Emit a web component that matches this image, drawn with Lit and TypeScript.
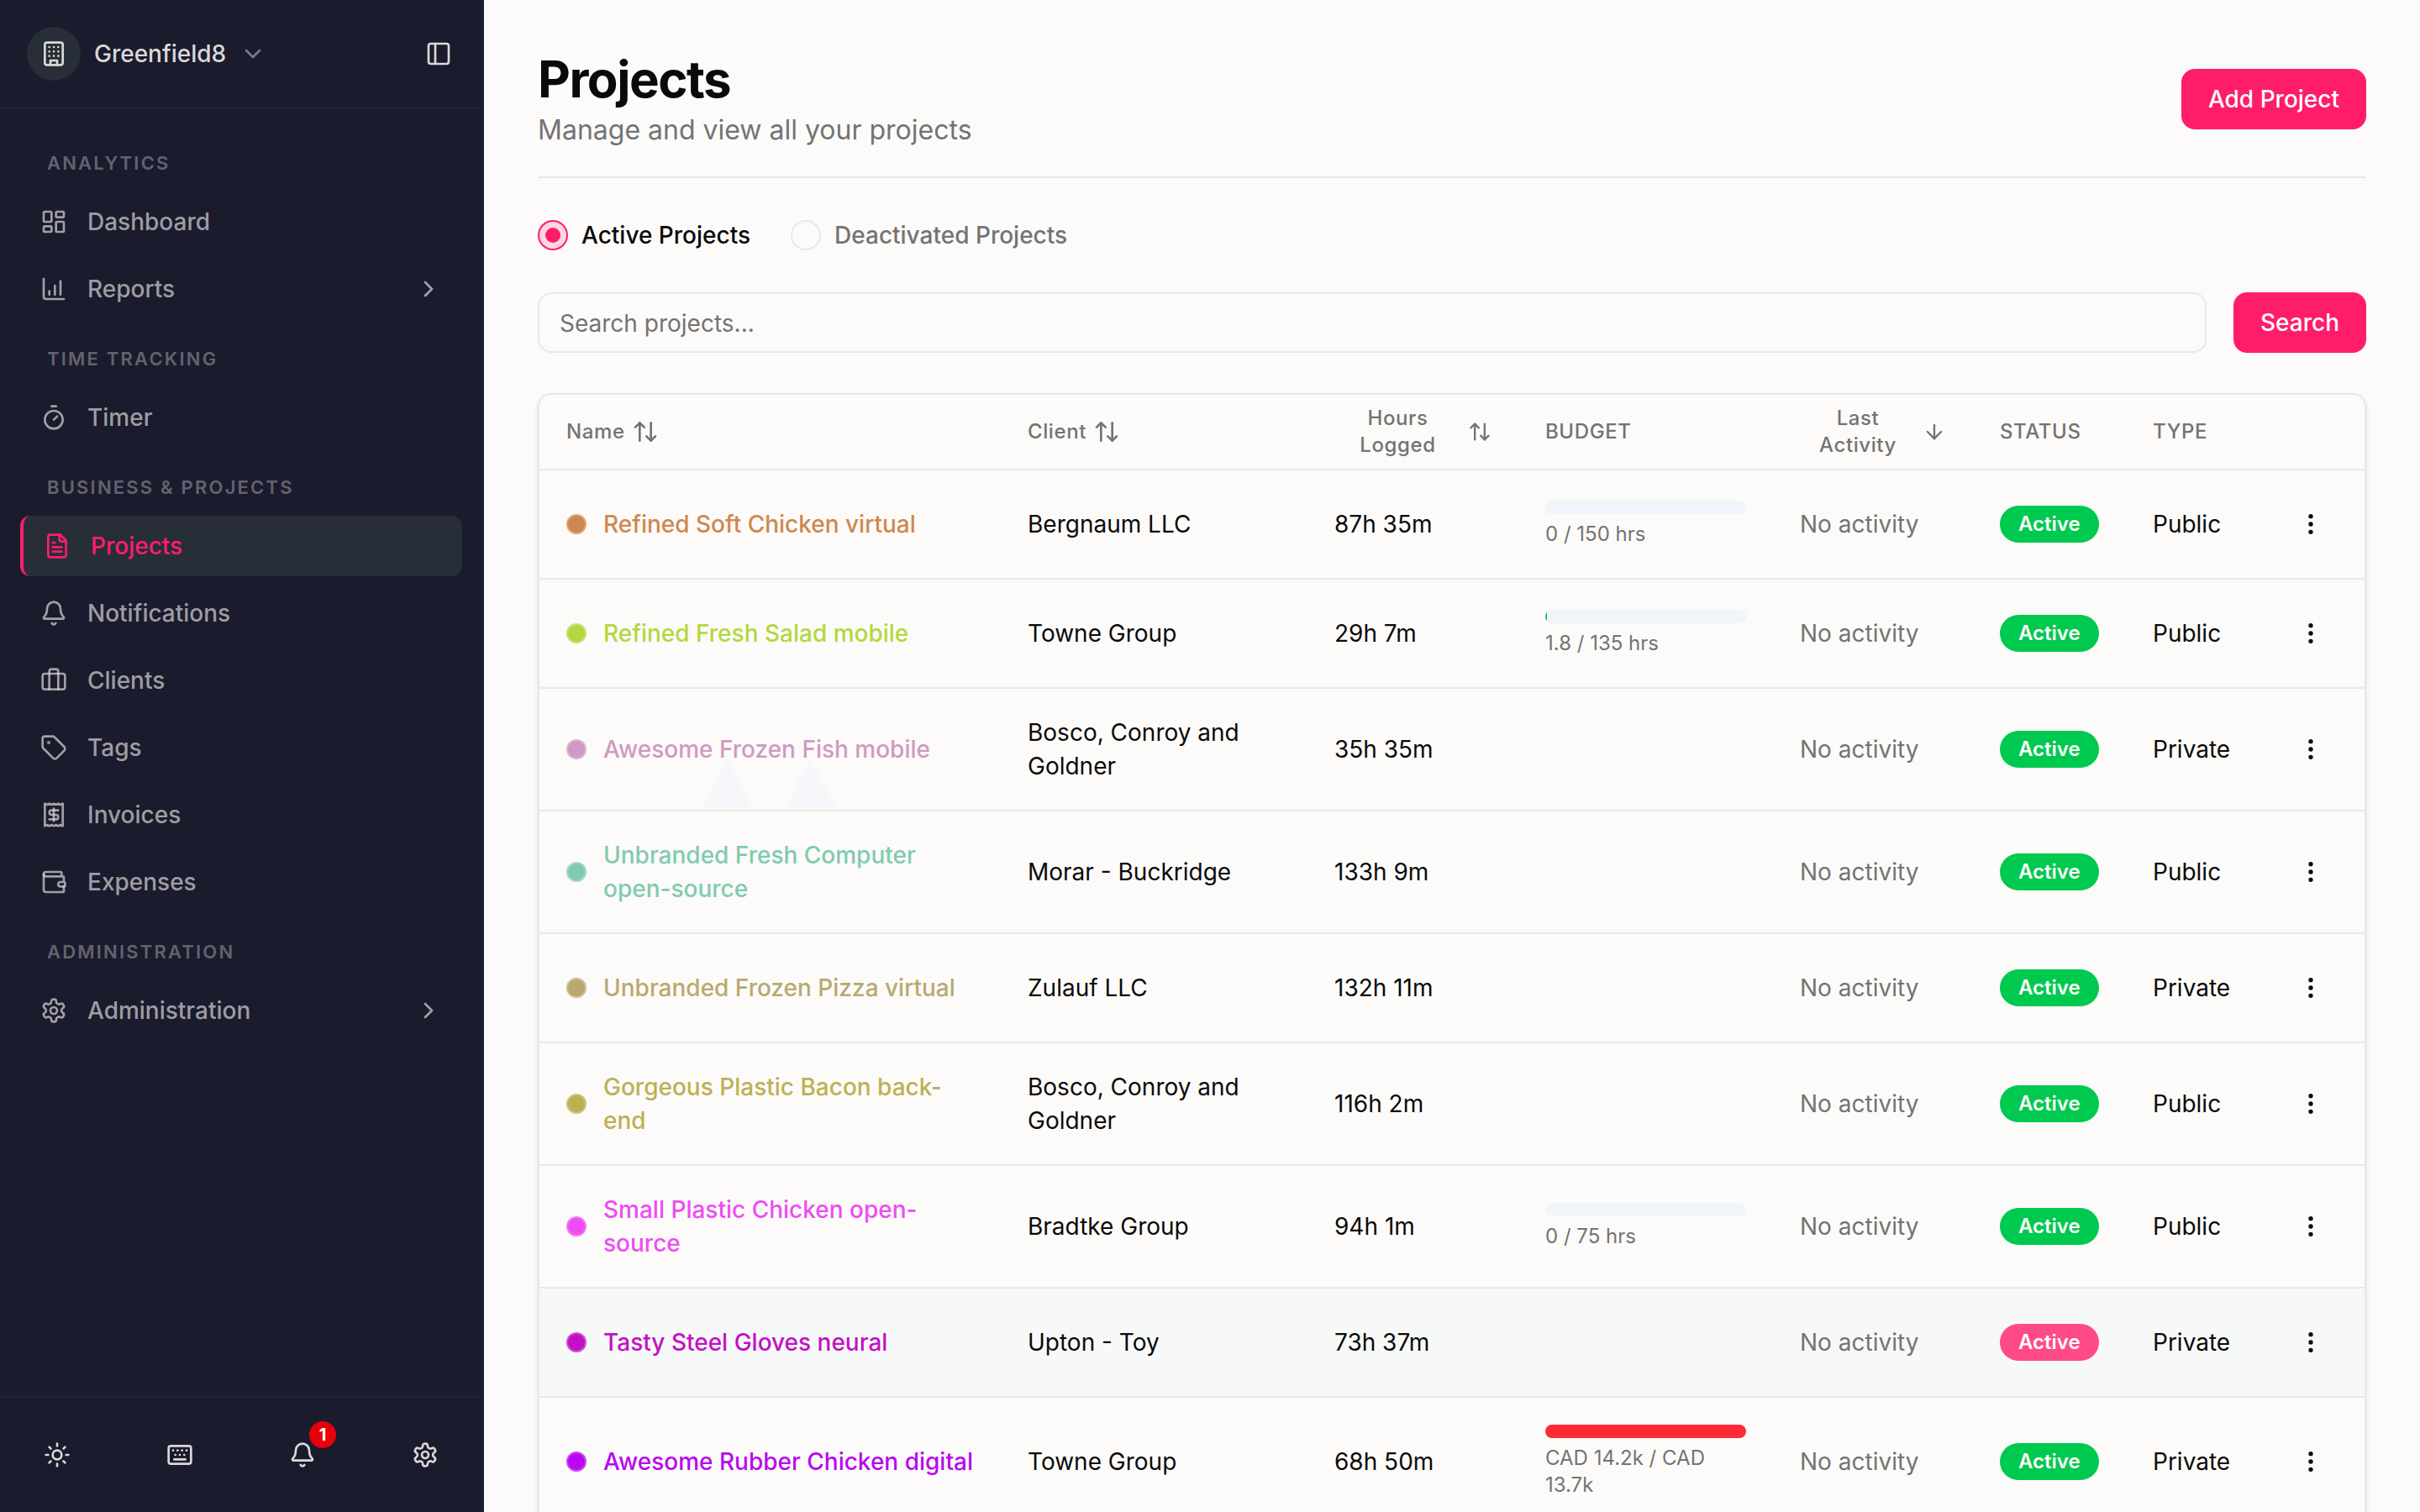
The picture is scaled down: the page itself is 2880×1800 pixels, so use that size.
import { LitElement, html, css, svg, nothing } from "lit";
import { customElement, property, state } from "lit/decorators.js";
import { classMap } from "lit/directives/class-map.js";
import { styleMap } from "lit/directives/style-map.js";

const ICONS: Record<string, ReturnType<typeof svg>> = {
  building: svg`<rect x="4" y="2" width="16" height="20" rx="2" /><path d="M9 22v-4h6v4" /><path d="M8 6h.01M16 6h.01M12 6h.01M12 10h.01M12 14h.01M16 10h.01M16 14h.01M8 10h.01M8 14h.01" />`,
  "chevron-down": svg`<path d="m6 9 6 6 6-6" />`,
  "chevron-right": svg`<path d="m9 18 6-6-6-6" />`,
  panel: svg`<rect x="3" y="3" width="18" height="18" rx="2" /><path d="M9 3v18" />`,
  dashboard: svg`<rect x="3" y="3" width="7" height="9" rx="1" /><rect x="14" y="3" width="7" height="5" rx="1" /><rect x="14" y="12" width="7" height="9" rx="1" /><rect x="3" y="16" width="7" height="5" rx="1" />`,
  chart: svg`<path d="M13 17V9" /><path d="M18 17V5" /><path d="M3 3v16a2 2 0 0 0 2 2h16" /><path d="M8 17v-3" />`,
  timer: svg`<path d="M10 2h4" /><path d="m12 14 3-3" /><circle cx="12" cy="14" r="8" />`,
  file: svg`<path d="M15 2H6a2 2 0 0 0-2 2v16a2 2 0 0 0 2 2h12a2 2 0 0 0 2-2V7Z" /><path d="M14 2v4a2 2 0 0 0 2 2h4" /><path d="M10 9H8" /><path d="M16 13H8" /><path d="M16 17H8" />`,
  bell: svg`<path d="M10.268 21a2 2 0 0 0 3.464 0" /><path d="M3.262 15.326A1 1 0 0 0 4 17h16a1 1 0 0 0 .74-1.673C19.41 13.956 18 12.499 18 8A6 6 0 0 0 6 8c0 4.499-1.411 5.956-2.738 7.326" />`,
  briefcase: svg`<path d="M16 20V4a2 2 0 0 0-2-2h-4a2 2 0 0 0-2 2v16" /><rect x="2" y="6" width="20" height="14" rx="2" />`,
  tag: svg`<path d="M12.586 2.586A2 2 0 0 0 11.172 2H4a2 2 0 0 0-2 2v7.172a2 2 0 0 0 .586 1.414l8.704 8.704a2.426 2.426 0 0 0 3.42 0l6.58-6.58a2.426 2.426 0 0 0 0-3.42z" /><circle cx="7.5" cy="7.5" r=".5" fill="currentColor" />`,
  receipt: svg`<path d="M4 2v20l2-1 2 1 2-1 2 1 2-1 2 1 2-1 2 1V2l-2 1-2-1-2 1-2-1-2 1-2-1-2 1Z" /><path d="M16 8h-6a2 2 0 1 0 0 4h4a2 2 0 1 1 0 4H8" /><path d="M12 17.5v-11" />`,
  wallet: svg`<path d="M19 7V4a1 1 0 0 0-1-1H5a2 2 0 0 0 0 4h15a1 1 0 0 1 1 1v4h-3a2 2 0 0 0 0 4h3a1 1 0 0 0 1-1v-2a1 1 0 0 0-1-1" /><path d="M3 5v14a2 2 0 0 0 2 2h15a1 1 0 0 0 1-1v-4" />`,
  settings: svg`<path d="M12.22 2h-.44a2 2 0 0 0-2 2v.18a2 2 0 0 1-1 1.73l-.43.25a2 2 0 0 1-2 0l-.15-.08a2 2 0 0 0-2.73.73l-.22.38a2 2 0 0 0 .73 2.73l.15.1a2 2 0 0 1 1 1.72v.51a2 2 0 0 1-1 1.74l-.15.09a2 2 0 0 0-.73 2.73l.22.38a2 2 0 0 0 2.73.73l.15-.08a2 2 0 0 1 2 0l.43.25a2 2 0 0 1 1 1.73V20a2 2 0 0 0 2 2h.44a2 2 0 0 0 2-2v-.18a2 2 0 0 1 1-1.73l.43-.25a2 2 0 0 1 2 0l.15.08a2 2 0 0 0 2.73-.73l.22-.39a2 2 0 0 0-.73-2.73l-.15-.08a2 2 0 0 1-1-1.74v-.5a2 2 0 0 1 1-1.74l.15-.09a2 2 0 0 0 .73-2.73l-.22-.38a2 2 0 0 0-2.73-.73l-.15.08a2 2 0 0 1-2 0l-.43-.25a2 2 0 0 1-1-1.73V4a2 2 0 0 0-2-2z" /><circle cx="12" cy="12" r="3" />`,
  sun: svg`<circle cx="12" cy="12" r="4" /><path d="M12 2v2" /><path d="M12 20v2" /><path d="m4.93 4.93 1.41 1.41" /><path d="m17.66 17.66 1.41 1.41" /><path d="M2 12h2" /><path d="M20 12h2" /><path d="m6.34 17.66-1.41 1.41" /><path d="m19.07 4.93-1.41 1.41" />`,
  keyboard: svg`<rect x="2" y="4" width="20" height="16" rx="2" /><path d="M6 8h.01M10 8h.01M14 8h.01M18 8h.01M8 12h.01M12 12h.01M16 12h.01" /><path d="M7 16h10" />`,
  sort: svg`<path d="m21 16-4 4-4-4" /><path d="M17 20V4" /><path d="m3 8 4-4 4 4" /><path d="M7 4v16" />`,
  "arrow-down": svg`<path d="M12 5v14" /><path d="m19 12-7 7-7-7" />`,
  dots: svg`<circle cx="12" cy="12" r="1" /><circle cx="12" cy="5" r="1" /><circle cx="12" cy="19" r="1" />`,
};

interface NavItem {
  label: string;
  icon: string;
  active?: boolean;
  expandable?: boolean;
}

interface NavGroup {
  title: string;
  items: NavItem[];
}

interface Project {
  name: string;
  color: string;
  client: string;
  hours: string;
  type: "Public" | "Private";
  budget?: { label: string; percent: number; over?: boolean };
  highlighted?: boolean;
  peaks?: boolean;
}

const NAV: NavGroup[] = [
  {
    title: "Analytics",
    items: [
      { label: "Dashboard", icon: "dashboard" },
      { label: "Reports", icon: "chart", expandable: true },
    ],
  },
  { title: "Time tracking", items: [{ label: "Timer", icon: "timer" }] },
  {
    title: "Business & projects",
    items: [
      { label: "Projects", icon: "file", active: true },
      { label: "Notifications", icon: "bell" },
      { label: "Clients", icon: "briefcase" },
      { label: "Tags", icon: "tag" },
      { label: "Invoices", icon: "receipt" },
      { label: "Expenses", icon: "wallet" },
    ],
  },
  {
    title: "Administration",
    items: [{ label: "Administration", icon: "settings", expandable: true }],
  },
];

const PROJECTS: Project[] = [
  { name: "Refined Soft Chicken virtual", color: "#ce884f", client: "Bergnaum LLC", hours: "87h 35m", type: "Public", budget: { label: "0 / 150 hrs", percent: 0 } },
  { name: "Refined Fresh Salad mobile", color: "#b2d83f", client: "Towne Group", hours: "29h 7m", type: "Public", budget: { label: "1.8 / 135 hrs", percent: 1 } },
  { name: "Awesome Frozen Fish mobile", color: "#cf9ac2", client: "Bosco, Conroy and Goldner", hours: "35h 35m", type: "Private", peaks: true },
  { name: "Unbranded Fresh Computer open-source", color: "#80cbb0", client: "Morar - Buckridge", hours: "133h 9m", type: "Public" },
  { name: "Unbranded Frozen Pizza virtual", color: "#b9a96f", client: "Zulauf LLC", hours: "132h 11m", type: "Private" },
  { name: "Gorgeous Plastic Bacon back-end", color: "#bdb053", client: "Bosco, Conroy and Goldner", hours: "116h 2m", type: "Public" },
  { name: "Small Plastic Chicken open-source", color: "#ed4df3", client: "Bradtke Group", hours: "94h 1m", type: "Public", budget: { label: "0 / 75 hrs", percent: 0 } },
  { name: "Tasty Steel Gloves neural", color: "#c310c6", client: "Upton - Toy", hours: "73h 37m", type: "Private", highlighted: true },
  { name: "Awesome Rubber Chicken digital", color: "#b908f0", client: "Towne Group", hours: "68h 50m", type: "Private", budget: { label: "CAD 14.2k / CAD 13.7k", percent: 100, over: true } },
];

const shared = css`
  *,
  *::before,
  *::after {
    box-sizing: border-box;
  }
  button,
  input {
    font: inherit;
    color: inherit;
    margin: 0;
  }
  button {
    border: 0;
    padding: 0;
    background: none;
    cursor: pointer;
  }
  a {
    color: inherit;
    text-decoration: none;
  }
`;

@customElement("ui-icon")
export class UiIcon extends LitElement {
  @property() name = "";

  static styles = css`
    :host {
      display: block;
      flex: none;
      width: 32px;
      height: 32px;
    }
    .icon {
      display: block;
      width: 100%;
      height: 100%;
      fill: none;
      stroke: currentColor;
      stroke-width: 2;
      stroke-linecap: round;
      stroke-linejoin: round;
    }
  `;

  render() {
    return html`<svg class="icon" viewBox="0 0 24 24" aria-hidden="true">${ICONS[this.name]}</svg>`;
  }
}

@customElement("app-sidebar")
export class AppSidebar extends LitElement {
  static styles = [
    shared,
    css`
      :host {
        display: flex;
        flex-direction: column;
        width: 576px;
        flex: none;
        background: #1b1b2e;
        border-right: 2px solid #1e2532;
        color: #dad9d7;
      }
      .header {
        display: flex;
        align-items: center;
        justify-content: space-between;
        padding: 32px 36px 32px 32px;
        border-bottom: 2px solid #1e2532;
      }
      .team {
        display: flex;
        align-items: center;
        gap: 16px;
        font-weight: 500;
      }
      .avatar {
        display: grid;
        place-items: center;
        width: 64px;
        height: 64px;
        border-radius: 50%;
        background: #272e37;
      }
      .caret {
        opacity: 0.5;
      }
      .nav {
        flex: 1;
        display: flex;
        flex-direction: column;
        gap: 16px;
        padding: 33px 24px;
      }
      .title {
        margin: 0;
        height: 65px;
        padding: 15px 32px;
        font-size: 22px;
        line-height: 32px;
        font-weight: 600;
        letter-spacing: 0.1em;
        text-transform: uppercase;
        color: rgba(218, 217, 215, 0.4);
      }
      .items {
        display: flex;
        flex-direction: column;
        gap: 8px;
        margin: 0;
        padding: 0;
        list-style: none;
      }
      .item {
        display: flex;
        align-items: center;
        gap: 24px;
        height: 72px;
        padding: 0 24px;
        border-radius: 12px;
        font-weight: 500;
        color: rgba(218, 217, 215, 0.7);
      }
      .item.active {
        border-left: 4px solid #ff1d6b;
        background: #272e37;
        color: #ff1d6b;
      }
      .label {
        flex: 1;
      }
      .footer {
        display: flex;
        justify-content: space-between;
        padding: 32px;
        border-top: 2px solid #1e2532;
      }
      .tool {
        position: relative;
        display: grid;
        place-items: center;
        width: 72px;
        height: 72px;
      }
      .count {
        position: absolute;
        top: -4px;
        right: -4px;
        width: 32px;
        height: 32px;
        border-radius: 50%;
        background: #e7000b;
        color: #fff;
        font-size: 20px;
        line-height: 32px;
        font-weight: 700;
        text-align: center;
      }
    `,
  ];

  render() {
    return html`
      <div class="header">
        <button class="team" type="button">
          <span class="avatar"><ui-icon name="building"></ui-icon></span>
          <span>Greenfield8</span>
          <ui-icon class="caret" name="chevron-down"></ui-icon>
        </button>
        <button type="button" aria-label="Toggle sidebar"><ui-icon name="panel"></ui-icon></button>
      </div>
      <nav class="nav">
        ${NAV.map(
          (group) => html`
            <section>
              <h2 class="title">${group.title}</h2>
              <ul class="items">
                ${group.items.map(
                  (item) => html`
                    <li>
                      <a
                        class=${classMap({ item: true, active: !!item.active })}
                        href="#"
                        aria-current=${item.active ? "page" : nothing}
                      >
                        <ui-icon name=${item.icon}></ui-icon>
                        <span class="label">${item.label}</span>
                        ${item.expandable ? html`<ui-icon name="chevron-right"></ui-icon>` : nothing}
                      </a>
                    </li>
                  `
                )}
              </ul>
            </section>
          `
        )}
      </nav>
      <div class="footer">
        <button class="tool" type="button" aria-label="Theme"><ui-icon name="sun"></ui-icon></button>
        <button class="tool" type="button" aria-label="Shortcuts"><ui-icon name="keyboard"></ui-icon></button>
        <button class="tool" type="button" aria-label="Notifications">
          <ui-icon name="bell"></ui-icon>
          <span class="count">1</span>
        </button>
        <button class="tool" type="button" aria-label="Settings"><ui-icon name="settings"></ui-icon></button>
      </div>
    `;
  }
}

@customElement("project-table")
export class ProjectTable extends LitElement {
  @property({ attribute: false }) projects: Project[] = [];

  static styles = [
    shared,
    css`
      :host {
        display: block;
        border: 2px solid #e8e8e6;
        border-radius: 16px;
        overflow: hidden;
        box-shadow: 0 2px 6px rgba(0, 0, 0, 0.1);
      }
      .table {
        width: 100%;
        table-layout: fixed;
        border-collapse: separate;
        border-spacing: 0;
        text-align: left;
      }
      .c-name { width: 549px; }
      .c-client { width: 365px; }
      .c-hours { width: 251px; }
      .c-budget { width: 303px; }
      .c-last { width: 238px; }
      .c-status { width: 182px; }
      .c-type { width: 156px; }
      .c-menu { width: 128px; }
      th {
        height: 90px;
        padding: 0 32px;
        border-bottom: 2px solid #e8e8e6;
        font-size: 24px;
        line-height: 32px;
        font-weight: 500;
        letter-spacing: 0.025em;
        color: #737373;
        vertical-align: middle;
      }
      td {
        padding: 32px;
        border-bottom: 2px solid #e8e8e6;
        vertical-align: middle;
      }
      .highlighted td {
        background: #f7f9f8;
      }
      .sort {
        display: flex;
        align-items: center;
        gap: 8px;
        letter-spacing: inherit;
      }
      .sort.wide {
        width: 100%;
      }
      .sort.wide span {
        flex: 1;
        text-align: center;
      }
      .narrow {
        width: 28px;
        height: 28px;
      }
      .name-cell {
        position: relative;
      }
      .name {
        display: flex;
        align-items: center;
        gap: 20px;
        font-weight: 500;
      }
      .dot {
        flex: none;
        width: 24px;
        height: 24px;
        border: 2px solid rgba(255, 255, 255, 0.25);
        border-radius: 50%;
      }
      .peaks {
        position: absolute;
        left: 192px;
        bottom: 0;
        width: 162px;
        height: 62px;
        fill: #f8f6fa;
      }
      .name a {
        position: relative;
        z-index: 1;
      }
      .bar {
        height: 16px;
        margin-bottom: 8px;
        border-radius: 8px;
        background: #f1f5f9;
        overflow: hidden;
      }
      .fill {
        height: 100%;
        background: #00c950;
      }
      .fill.over {
        background: #fb2c36;
      }
      .amount {
        font-size: 24px;
        line-height: 32px;
        color: #737373;
      }
      .muted {
        color: #737373;
      }
      .badge {
        display: block;
        width: fit-content;
        padding: 6px 22px;
        border-radius: 22px;
        background: #00c950;
        color: #fcfbfa;
        font-size: 24px;
        line-height: 32px;
        font-weight: 600;
      }
      .highlighted .badge {
        background: #ff4a88;
      }
      .menu {
        display: grid;
        place-items: center;
        width: 64px;
        height: 64px;
      }
    `,
  ];

  private renderBudget(budget?: Project["budget"]) {
    if (!budget) return nothing;
    return html`
      <div class="bar">
        <div
          class=${classMap({ fill: true, over: !!budget.over })}
          style=${styleMap({ width: `${budget.percent}%` })}
        ></div>
      </div>
      <div class="amount">${budget.label}</div>
    `;
  }

  private renderRow(project: Project) {
    return html`
      <tr class=${classMap({ highlighted: !!project.highlighted })}>
        <td class="name-cell">
          ${project.peaks
            ? html`<svg class="peaks" viewBox="0 0 162 62" aria-hidden="true">
                <path d="M0 62 31 0 62 62ZM99 62 130 0 162 62Z" />
              </svg>`
            : nothing}
          <div class="name" style=${styleMap({ color: project.color })}>
            <span class="dot" style=${styleMap({ "background-color": project.color })}></span>
            <a href="#">${project.name}</a>
          </div>
        </td>
        <td>${project.client}</td>
        <td>${project.hours}</td>
        <td>${this.renderBudget(project.budget)}</td>
        <td class="muted">No activity</td>
        <td><span class="badge">Active</span></td>
        <td>${project.type}</td>
        <td>
          <button class="menu" type="button" aria-label="Project actions"><ui-icon name="dots"></ui-icon></button>
        </td>
      </tr>
    `;
  }

  render() {
    return html`
      <table class="table">
        <colgroup>
          <col class="c-name" />
          <col class="c-client" />
          <col class="c-hours" />
          <col class="c-budget" />
          <col class="c-last" />
          <col class="c-status" />
          <col class="c-type" />
          <col class="c-menu" />
        </colgroup>
        <thead>
          <tr>
            <th scope="col"><button class="sort" type="button">Name <ui-icon name="sort"></ui-icon></button></th>
            <th scope="col"><button class="sort" type="button">Client <ui-icon name="sort"></ui-icon></button></th>
            <th scope="col">
              <button class="sort wide" type="button">
                <span>Hours<br />Logged</span><ui-icon class="narrow" name="sort"></ui-icon>
              </button>
            </th>
            <th scope="col">BUDGET</th>
            <th scope="col" aria-sort="descending">
              <button class="sort wide" type="button">
                <span>Last<br />Activity</span><ui-icon class="narrow" name="arrow-down"></ui-icon>
              </button>
            </th>
            <th scope="col">STATUS</th>
            <th scope="col">TYPE</th>
            <th scope="col"></th>
          </tr>
        </thead>
        <tbody>
          ${this.projects.map((project) => this.renderRow(project))}
        </tbody>
      </table>
    `;
  }
}

@customElement("app-root")
export class AppRoot extends LitElement {
  @state() private filter: "active" | "deactivated" = "active";

  static styles = [
    shared,
    css`
      :host {
        display: flex;
        height: 100vh;
        overflow: hidden;
        background: #fcfbf9;
        color: #0a0a0a;
        font-family: Inter, "Liberation Sans", sans-serif;
        font-size: 28px;
        line-height: 40px;
      }
      .main {
        flex: 1;
        min-width: 0;
        padding: 57px 64px 0;
        overflow: hidden;
      }
      .page-header {
        display: flex;
        align-items: center;
        justify-content: space-between;
        padding-bottom: 31px;
        border-bottom: 2px solid #e8e8e6;
      }
      .heading {
        margin: 0;
        font-size: 60px;
        line-height: 74px;
        font-weight: 700;
        letter-spacing: -0.025em;
      }
      .subtitle {
        margin: 0;
        font-size: 32px;
        line-height: 48px;
        color: #737373;
      }
      .primary {
        height: 72px;
        padding: 0 32px;
        border-radius: 16px;
        background: #ff1d6b;
        color: #fcfbfa;
        font-weight: 500;
      }
      .filters {
        display: flex;
        gap: 48px;
        margin: 48px 0;
        padding: 0;
        border: 0;
      }
      .option {
        display: flex;
        align-items: center;
        gap: 16px;
        font-weight: 500;
        color: #737373;
      }
      .option.selected {
        color: #0a0a0a;
      }
      .radio {
        appearance: none;
        display: grid;
        place-items: center;
        width: 36px;
        height: 36px;
        border: 2px solid #e8e8e6;
        border-radius: 50%;
      }
      .radio:checked {
        border-color: #ff1d6b;
        background: #fdd6e2;
      }
      .radio:checked::before {
        content: "";
        width: 18px;
        height: 18px;
        border-radius: 50%;
        background: #ff1d6b;
      }
      .search {
        display: flex;
        gap: 32px;
        margin-bottom: 48px;
      }
      .query {
        flex: 1;
        min-width: 0;
        height: 72px;
        padding: 2px 24px 0;
        border: 2px solid #e8e8e6;
        border-radius: 16px;
        background: transparent;
        outline: none;
      }
      .query::placeholder {
        color: #737373;
        opacity: 1;
      }
    `,
  ];

  private renderOption(value: "active" | "deactivated", label: string) {
    const selected = this.filter === value;
    return html`
      <label class=${classMap({ option: true, selected })}>
        <input
          class="radio"
          type="radio"
          name="filter"
          .checked=${selected}
          @change=${() => (this.filter = value)}
        />
        ${label}
      </label>
    `;
  }

  render() {
    return html`
      <app-sidebar></app-sidebar>
      <main class="main">
        <header class="page-header">
          <div>
            <h1 class="heading">Projects</h1>
            <p class="subtitle">Manage and view all your projects</p>
          </div>
          <button class="primary" type="button">Add Project</button>
        </header>
        <div class="filters" role="radiogroup" aria-label="Project status">
          ${this.renderOption("active", "Active Projects")}
          ${this.renderOption("deactivated", "Deactivated Projects")}
        </div>
        <form class="search" @submit=${(e: Event) => e.preventDefault()}>
          <input class="query" type="search" placeholder="Search projects..." aria-label="Search projects" />
          <button class="primary" type="submit">Search</button>
        </form>
        <project-table .projects=${PROJECTS}></project-table>
      </main>
    `;
  }
}
